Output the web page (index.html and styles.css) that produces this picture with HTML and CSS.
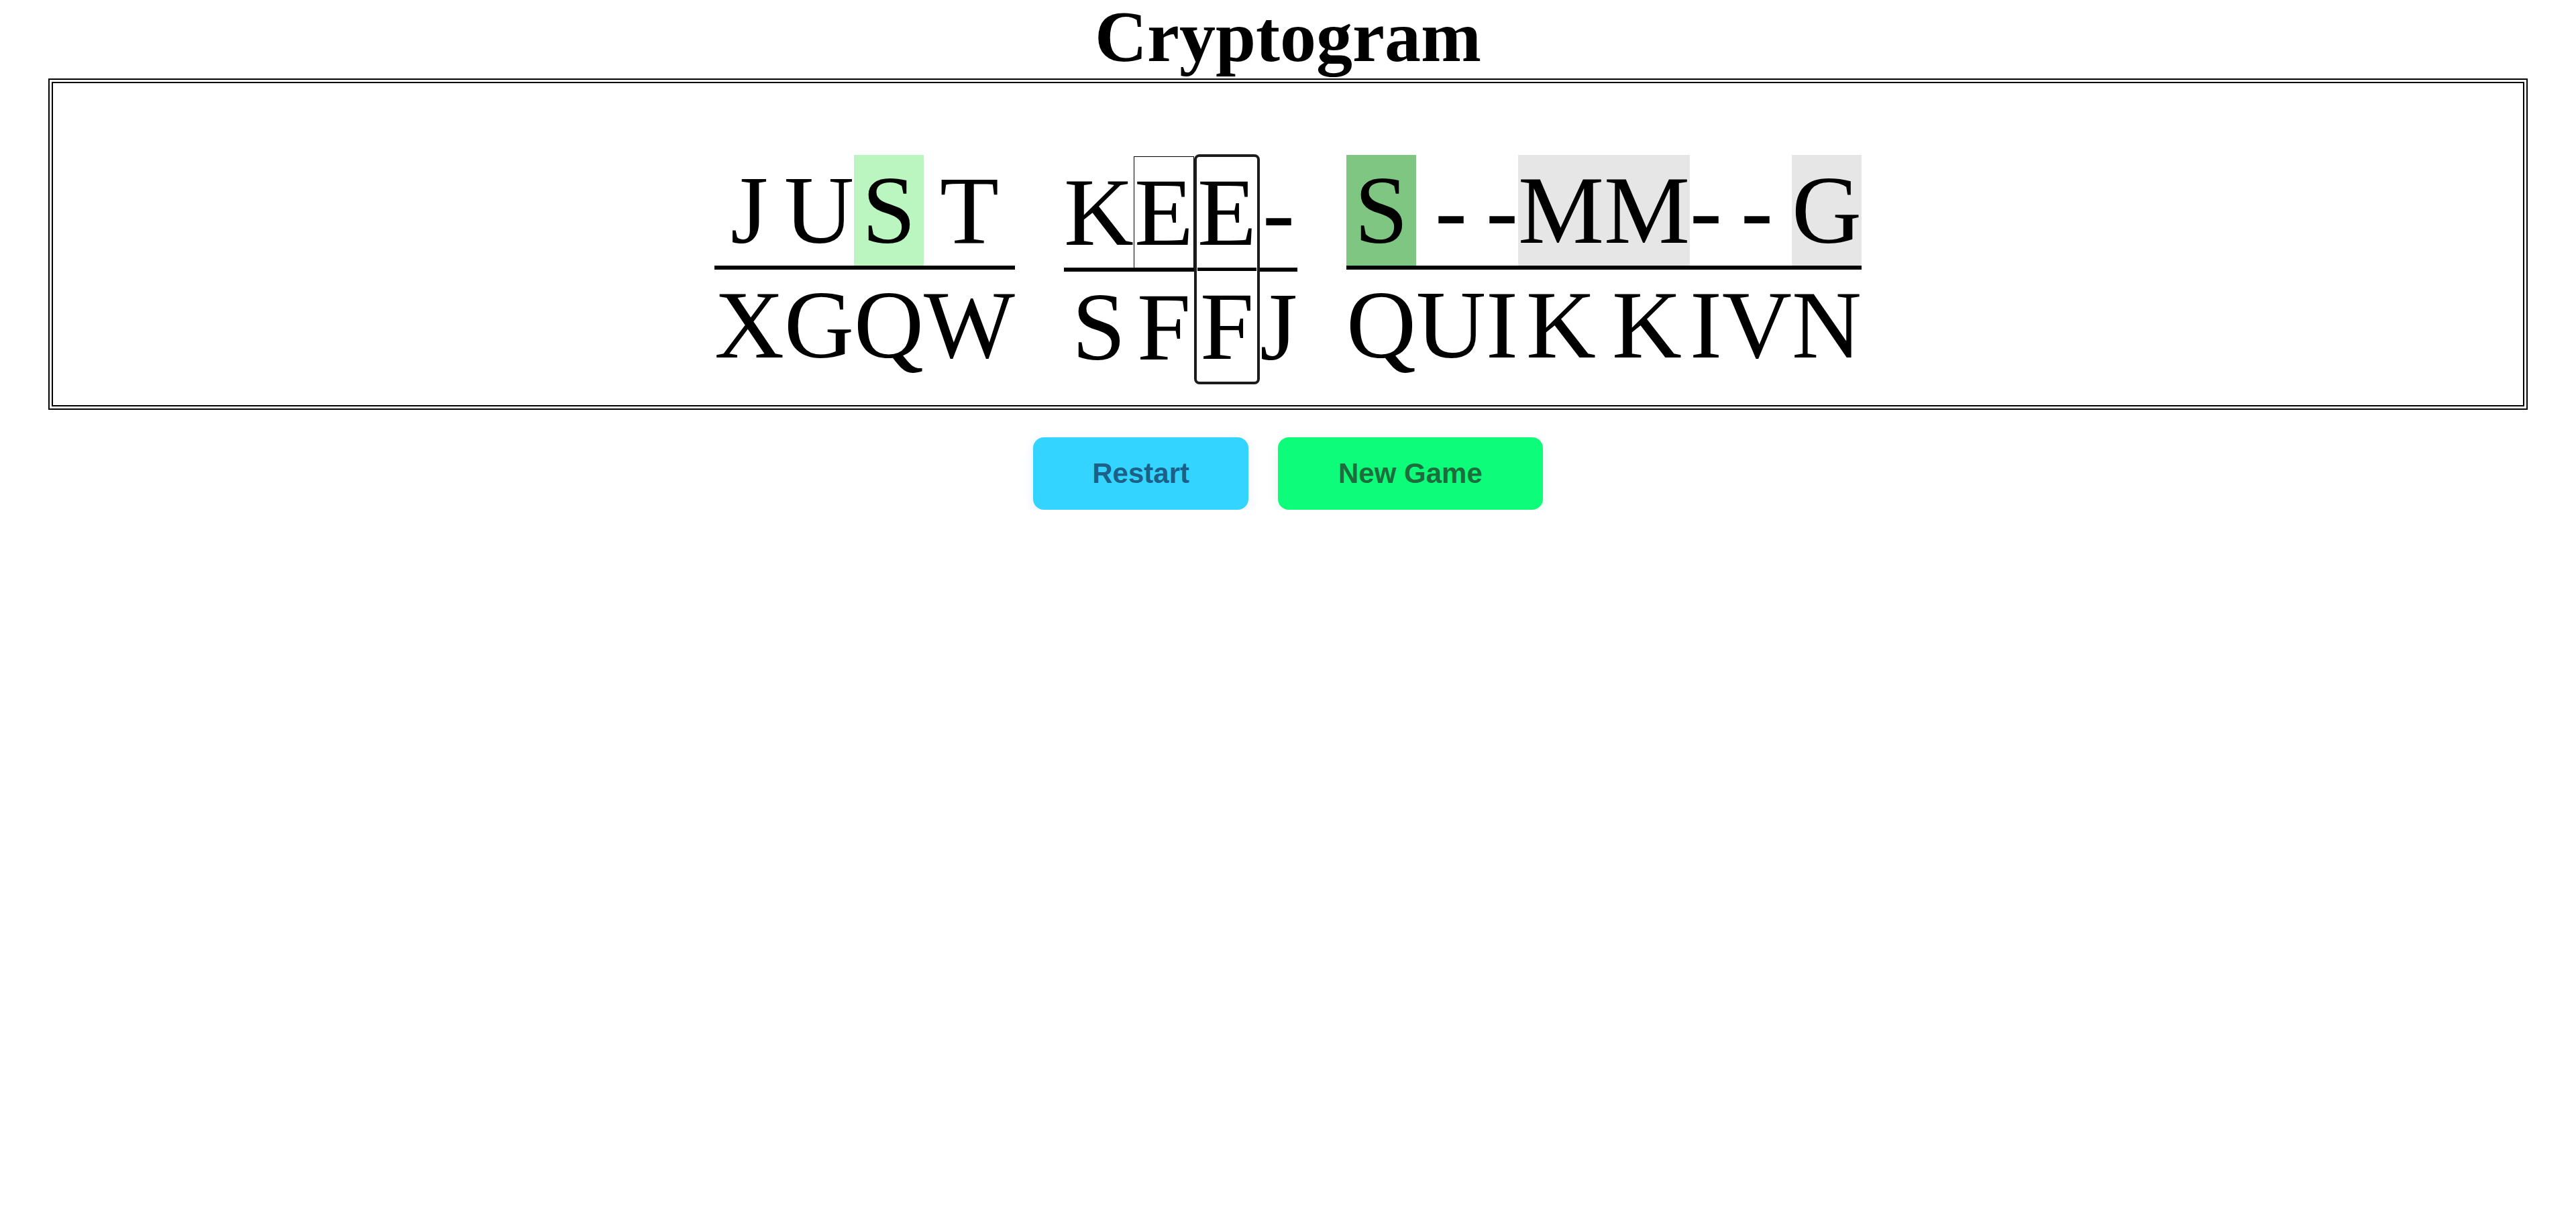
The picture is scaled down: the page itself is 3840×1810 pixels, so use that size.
FILE: index.html
```html
<!DOCTYPE html>
<html lang="en">
<head>
<meta charset="utf-8">
<title>Cryptogram</title>
<link rel="stylesheet" href="styles.css">
</head>
<body>
<h1 class="title">Cryptogram</h1>
<div class="board">
  <div class="phrase">
    <div class="word">
      <div class="col"><div class="guess">J</div><div class="cipher">X</div></div>
      <div class="col"><div class="guess">U</div><div class="cipher">G</div></div>
      <div class="col"><div class="guess hl-light">S</div><div class="cipher">Q</div></div>
      <div class="col"><div class="guess">T</div><div class="cipher">W</div></div>
    </div>
    <div class="word word-shift">
      <div class="col"><div class="guess">K</div><div class="cipher">S</div></div>
      <div class="col col-same"><div class="guess same">E</div><div class="cipher">F</div></div>
      <div class="col col-selected"><div class="guess">E</div><div class="cipher">F</div></div>
      <div class="col"><div class="guess">-</div><div class="cipher">J</div></div>
    </div>
    <div class="word">
      <div class="col"><div class="guess hl-dark">S</div><div class="cipher">Q</div></div>
      <div class="col"><div class="guess">-</div><div class="cipher">U</div></div>
      <div class="col"><div class="guess">-</div><div class="cipher">I</div></div>
      <div class="col"><div class="guess hl-gray">M</div><div class="cipher">K</div></div>
      <div class="col"><div class="guess hl-gray">M</div><div class="cipher">K</div></div>
      <div class="col"><div class="guess">-</div><div class="cipher">I</div></div>
      <div class="col"><div class="guess">-</div><div class="cipher">V</div></div>
      <div class="col"><div class="guess hl-gray">G</div><div class="cipher">N</div></div>
    </div>
  </div>
</div>
<div class="actions">
  <button class="btn btn-restart" type="button">Restart</button>
  <button class="btn btn-new" type="button">New Game</button>
</div>
</body>
</html>
```

FILE: styles.css
```css
html, body {
  margin: 0;
  padding: 0;
  background: #ffffff;
}

body {
  font-family: "Liberation Serif", "Times New Roman", serif;
  color: #000;
}

.title {
  margin: 0;
  padding-top: 1px;
  font-family: "Liberation Serif", "Times New Roman", serif;
  font-weight: 700;
  font-size: 108px;
  line-height: 1;
  text-align: center;
}

.board {
  margin: 8px 72px 0;
  border: 7px double #000;
  padding: 107px 0 31px;
}

.phrase {
  display: flex;
  justify-content: center;
  align-items: flex-start;
  gap: 73px;
}

.word {
  display: flex;
  align-items: flex-start;
}

.word-shift {
  margin-top: 3px;
}

.col {
  display: flex;
  flex-direction: column;
  align-items: stretch;
}

.guess,
.cipher {
  font-family: "Liberation Serif", "Times New Roman", serif;
  font-size: 144px;
  line-height: normal;
  text-align: center;
}

.guess {
  border-bottom: 6px solid #000;
}

.col-same {
  margin-top: -1px;
}

.same {
  border: 1px solid #000;
  border-bottom: 6px solid #000;
}

.col-selected {
  margin-top: -4px;
  border: 4px solid #1c1c1c;
  border-radius: 8px;
  padding: 0 1px;
}

.col-selected .guess {
  border-bottom-width: 5px;
}

.hl-light {
  background: #bbf5bf;
}

.hl-dark {
  background: #80c683;
}

.hl-gray {
  background: #e6e6e6;
}

.actions {
  display: flex;
  justify-content: center;
  gap: 44px;
  margin-top: 41px;
}

.btn {
  font-family: "Liberation Sans", Arial, sans-serif;
  font-weight: 700;
  font-size: 42px;
  line-height: normal;
  padding: 30px 88px;
  border: none;
  border-radius: 16px;
  cursor: pointer;
}

.btn-restart {
  background: #33d4ff;
  color: #1c5f87;
  box-shadow: 0 4px 16px rgba(60, 120, 255, 0.12);
}

.btn-new {
  background: #0dfd7b;
  color: #1b6e3b;
  padding: 30px 90px;
  box-shadow: 0 4px 16px rgba(20, 200, 80, 0.12);
}
```
